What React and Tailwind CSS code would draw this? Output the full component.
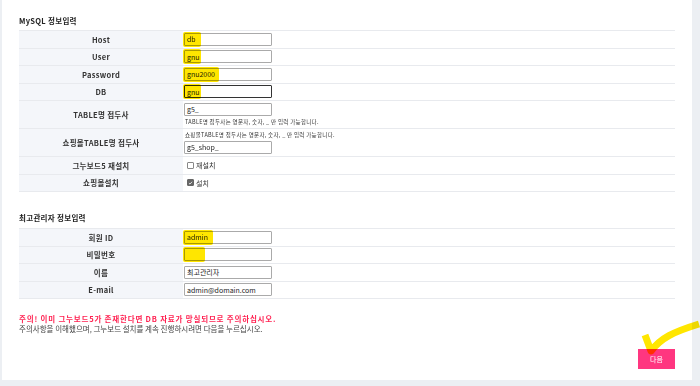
import React from "react";

const font = { fontFamily: '"Noto Sans CJK KR", "Liberation Sans", sans-serif' };

const Hl = ({ w }) => (
  <span
    className="absolute left-[-1px] top-[-1px] h-[15px] bg-[#ffe600] mix-blend-multiply rounded-[2px]"
    style={{ width: w }}
  />
);

const Field = ({ value, hl, focus }) => (
  <div className="relative w-[88px] h-[13px]">
    <div
      className={`w-full h-full bg-white rounded-[1px] flex items-center px-[2px] text-[7px] text-[#222] ${
        focus ? "border border-[#333]" : "border border-[#aaa]"
      }`}
    >
      {value}
    </div>
    {hl ? <Hl w={hl} /> : null}
  </div>
);

const Row = ({ label, h = "h-[17.5px]", children }) => (
  <div className={`flex ${h} border-b border-[#e8eaee]`}>
    <div className="w-[164px] bg-[#f4f6fa] flex items-center justify-center text-[7.5px] font-bold text-[#333] tracking-[0.3px]">
      {label}
    </div>
    <div className="flex-1 flex flex-col justify-center pl-[1px]">{children}</div>
  </div>
);

const Check = ({ checked, label }) => (
  <div className="flex items-center gap-[2px] pl-[3px] text-[7px] text-[#333]">
    <span
      className={`w-[7px] h-[7px] border rounded-[1px] flex items-center justify-center ${
        checked ? "bg-[#666] border-[#666]" : "bg-white border-[#888]"
      }`}
    >
      {checked && (
        <svg viewBox="0 0 8 8" className="w-[6px] h-[6px]">
          <path d="M1.5 4.2 L3.2 5.8 L6.5 2" stroke="#fff" strokeWidth="1.3" fill="none" />
        </svg>
      )}
    </span>
    {label}
  </div>
);

export default function App() {
  return (
    <div className="w-[700px] h-[386px] bg-[#eceff3] overflow-hidden" style={font}>
      <div className="relative ml-[2px] w-[690px] h-[380px] bg-white pl-[17px] pt-[15px]">
        <div className="text-[7.5px] font-bold text-[#222] h-[15px] tracking-[0.3px]">MySQL 정보입력</div>
        <div className="w-[656px] border-t border-[#e8eaee]">
          <Row label="Host">
            <Field value="db" hl="18px" />
          </Row>
          <Row label="User">
            <Field value="gnu" hl="18px" />
          </Row>
          <Row label="Password">
            <Field value="gnu2000" hl="36px" />
          </Row>
          <Row label="DB">
            <Field value="gnu" hl="18px" focus />
          </Row>
          <Row label="TABLE명 접두사" h="h-[28px]">
            <Field value="g5_" />
            <div className="text-[5.5px] text-[#333] mt-[2px] pl-[1px] tracking-[0.3px]">
              TABLE명 접두사는 영문자, 숫자, _ 만 입력 가능합니다.
            </div>
          </Row>
          <Row label="쇼핑몰TABLE명 접두사" h="h-[28px]">
            <div className="text-[5.5px] text-[#333] mb-[2px] pl-[1px] tracking-[0.3px]">
              쇼핑몰TABLE명 접두사는 영문자, 숫자, _ 만 입력 가능합니다.
            </div>
            <Field value="g5_shop_" />
          </Row>
          <Row label="그누보드5 재설치">
            <Check label="재설치" />
          </Row>
          <Row label="쇼핑몰설치">
            <Check checked label="설치" />
          </Row>
        </div>

        <div className="text-[7.5px] font-bold text-[#222] mt-[20px] h-[16px] flex items-start tracking-[0.3px]">
          최고관리자 정보입력
        </div>
        <div className="w-[656px] border-t border-[#e8eaee]">
          <Row label="회원 ID">
            <Field value="admin" hl="30px" />
          </Row>
          <Row label="비밀번호">
            <Field value="" hl="22px" />
          </Row>
          <Row label="이름">
            <Field value="최고관리자" />
          </Row>
          <Row label="E-mail">
            <Field value="admin@domain.com" />
          </Row>
        </div>

        <div className="mt-[15px] text-[7.5px] leading-[10px]">
          <div className="font-bold text-[#ff1f4f] tracking-[0.8px]">
            주의! 이미 그누보드5가 존재한다면 DB 자료가 망실되므로 주의하십시오.
          </div>
          <div className="text-[#444]">
            주의사항을 이해했으며, 그누보드 설치를 계속 진행하시려면 다음을 누르십시오.
          </div>
        </div>

        <div className="flex justify-end w-[656px] mt-[15px]">
          <button className="w-[37px] h-[20px] bg-[#ff3680] text-white text-[7px] flex items-center justify-center">
            다음
          </button>
        </div>

        <svg
          className="absolute left-[639px] top-[318px] w-[60px] h-[40px] mix-blend-multiply"
          viewBox="0 0 60 40"
        >
          <path
            d="M4 17 L10 33 C20 20 32 14 58 6"
            stroke="#ffe600"
            strokeWidth="7"
            fill="none"
            strokeLinejoin="round"
          />
        </svg>
      </div>
    </div>
  );
}
